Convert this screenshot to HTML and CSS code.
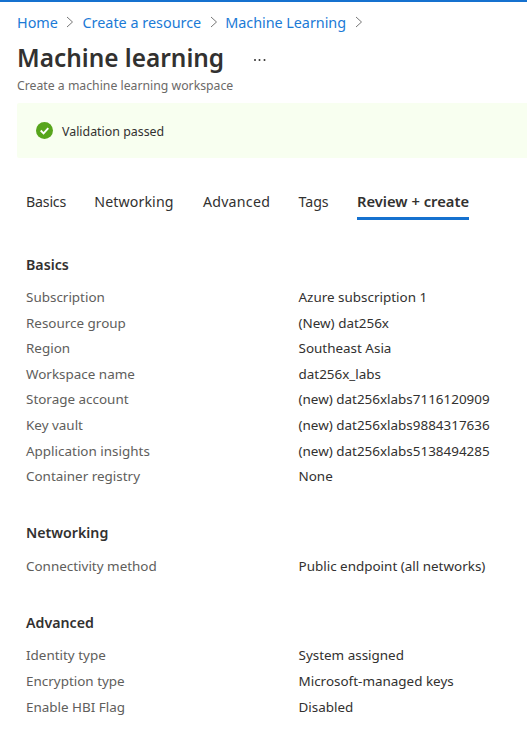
FILE: index.html
```html
<!DOCTYPE html>
<html lang="en"><head><meta charset="utf-8"><title>Machine learning</title><link rel="stylesheet" href="styles.css"></head>
<body>
<nav class="crumbs">
<a>Home</a><svg class="chev" viewBox="0 0 8 12"><path d="M1 1l5.5 5-5.5 5"/></svg>
<a>Create a resource</a><svg class="chev" viewBox="0 0 8 12"><path d="M1 1l5.5 5-5.5 5"/></svg>
<a class="last">Machine Learning</a><svg class="chev" viewBox="0 0 8 12"><path d="M1 1l5.5 5-5.5 5"/></svg>
</nav>
<header class="head"><h1>Machine learning</h1><svg class="more" viewBox="0 0 14 4"><circle cx="2" cy="2" r="1"/><circle cx="6.5" cy="2" r="1"/><circle cx="11.5" cy="2" r="1"/></svg></header>
<p class="sub">Create a machine learning workspace</p>
<div class="banner"><svg viewBox="0 0 18 18"><circle cx="9" cy="9" r="9"/><path d="M5 9l3 3 5-5.5"/></svg><span>Validation passed</span></div>
<div class="tabs"><a class="basics">Basics</a><a class="networking">Networking</a><a class="advanced">Advanced</a><a>Tags</a><a class="active">Review + create</a></div>
<main>
<section><h2>Basics</h2><dl>
<dt>Subscription</dt><dd>Azure subscription 1</dd>
<dt>Resource group</dt><dd>(New) dat256x</dd>
<dt>Region</dt><dd>Southeast Asia</dd>
<dt>Workspace name</dt><dd>dat256x_labs</dd>
<dt>Storage account</dt><dd>(new) dat256xlabs7116120909</dd>
<dt>Key vault</dt><dd>(new) dat256xlabs9884317636</dd>
<dt>Application insights</dt><dd>(new) dat256xlabs5138494285</dd>
<dt>Container registry</dt><dd>None</dd></dl></section>
<section><h2>Networking</h2><dl><dt>Connectivity method</dt><dd>Public endpoint (all networks)</dd></dl></section>
<section><h2>Advanced</h2><dl><dt>Identity type</dt><dd>System assigned</dd><dt>Encryption type</dt><dd>Microsoft-managed keys</dd><dt>Enable HBI Flag</dt><dd>Disabled</dd></dl></section>
</main>
</body></html>
```
FILE: styles.css
```css
* { box-sizing: border-box; }
body { margin: 0; height: 744px; overflow: hidden; background: #fff; border-top: 2px solid #1571cf; font: 13.45px "Noto Sans", sans-serif; color: #323130; }
h1, h2, p, dl, dd { margin: 0; }
.crumbs { display: flex; align-items: center; height: 40px; padding-left: 17px; font-size: 14.4px; color: #1b7ad6; white-space: nowrap; }
.crumbs .last { margin-left: -0.5px; letter-spacing: -0.04px; }
.chev { width: 8px; height: 12px; margin: 0 8px 0 8.5px; fill: none; stroke: #777; flex: none; }
.head { display: flex; align-items: center; height: 33px; padding-left: 17px; }
h1 { width: 236px; padding-bottom: 2px; font-size: 24.4px; font-weight: 600; line-height: 32px; white-space: nowrap; }
.more { width: 14px; height: 4px; margin-top: 3px; fill: #323130; }
.sub { height: 28px; padding-left: 17px; font-size: 12.25px; line-height: 21px; color: #6b6967; }
.banner { display: flex; align-items: center; gap: 9px; height: 55px; margin-left: 17px; padding-left: 19px; background: #f8fff0; border-radius: 2px 0 0 2px; font-size: 12.4px; }
.banner svg { width: 17px; height: 17px; fill: #57a51c; }
.banner path { fill: none; stroke: #fff; stroke-width: 2; }
.banner span { padding-top: 1px; }
.tabs { display: flex; gap: 28.3px; margin: 28px 0 0 26px; height: 34px; font-size: 14.2px; line-height: 31px; white-space: nowrap; }
.tabs .basics { letter-spacing: -0.2px; }
.tabs .networking { letter-spacing: 0.1px; }
.tabs .advanced { margin-left: 1px; letter-spacing: 0.25px; }
.tabs .active { font-size: 14.75px; font-weight: 600; border-bottom: 3px solid #1571cf; }
main { padding: 32px 0 0 26px; }
section { margin-bottom: 30px; }
h2 { font-size: 14.2px; font-weight: 600; line-height: 26px; margin-bottom: 7px; }
section + section h2 { margin-bottom: 8px; }
section:last-child h2 { padding-top: 1px; margin-bottom: 7px; }
dl { display: grid; grid-template-columns: 272.5px 1fr; grid-auto-rows: 25.6px; line-height: 25.6px; white-space: nowrap; }
dt { color: #605e5c; }
```
